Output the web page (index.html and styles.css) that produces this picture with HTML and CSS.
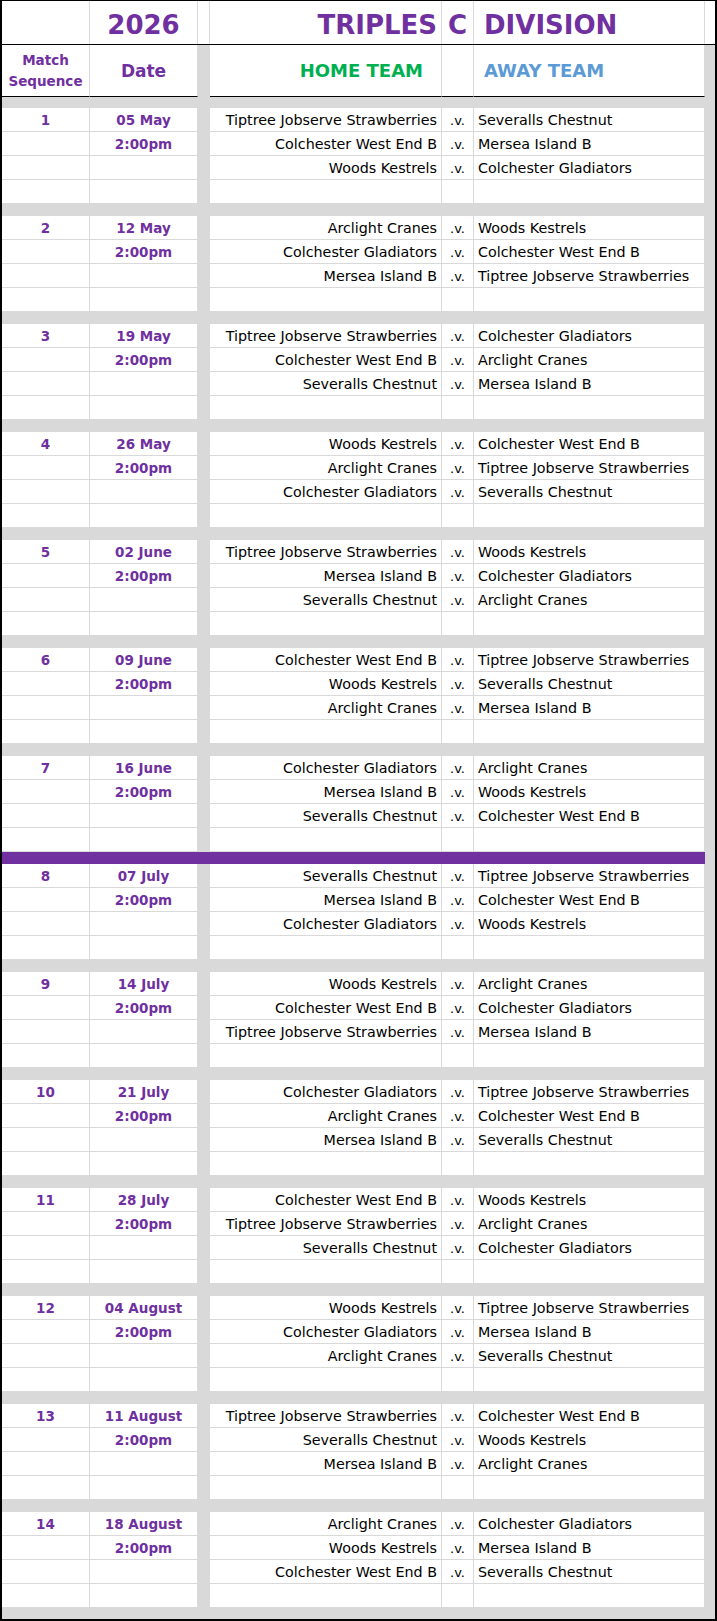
FILE: index.html
```html
<!DOCTYPE html>
<html lang="en">
<head>
<meta charset="utf-8">
<title>Triples C Division 2026</title>
<link rel="stylesheet" href="styles.css">
</head>
<body>
<div class="sheet">
  <div class="grid title">
    <div class="c"></div>
    <div class="c ctr">2026</div>
    <div class="c"></div>
    <div class="c home">TRIPLES</div>
    <div class="c ctr">C</div>
    <div class="c away">DIVISION</div>
    <div class="c last"></div>
  </div>
  <div class="grid head">
    <div class="c ctr seqhead">Match<br>Sequence</div>
    <div class="c ctr datehead">Date</div>
    <div class="gap"></div>
    <div class="c home green">HOME TEAM</div>
    <div class="c"></div>
    <div class="c away blue">AWAY TEAM</div>
    <div class="gap"></div>
  </div>
  <div class="band top"></div>

  <!-- 1 -->
  <div class="grid row"><div class="c num">1</div><div class="c num">05 May</div><div class="gap"></div><div class="c home">Tiptree Jobserve Strawberries</div><div class="c vs">.v.</div><div class="c away">Severalls Chestnut</div><div class="gap"></div></div>
  <div class="grid row"><div class="c num"></div><div class="c num">2:00pm</div><div class="gap"></div><div class="c home">Colchester West End B</div><div class="c vs">.v.</div><div class="c away">Mersea Island B</div><div class="gap"></div></div>
  <div class="grid row"><div class="c num"></div><div class="c num"></div><div class="gap"></div><div class="c home">Woods Kestrels</div><div class="c vs">.v.</div><div class="c away">Colchester Gladiators</div><div class="gap"></div></div>
  <div class="grid row"><div class="c"></div><div class="c"></div><div class="gap"></div><div class="c"></div><div class="c"></div><div class="c"></div><div class="gap"></div></div>
  <div class="band"></div>

  <!-- 2 -->
  <div class="grid row"><div class="c num">2</div><div class="c num">12 May</div><div class="gap"></div><div class="c home">Arclight Cranes</div><div class="c vs">.v.</div><div class="c away">Woods Kestrels</div><div class="gap"></div></div>
  <div class="grid row"><div class="c num"></div><div class="c num">2:00pm</div><div class="gap"></div><div class="c home">Colchester Gladiators</div><div class="c vs">.v.</div><div class="c away">Colchester West End B</div><div class="gap"></div></div>
  <div class="grid row"><div class="c num"></div><div class="c num"></div><div class="gap"></div><div class="c home">Mersea Island B</div><div class="c vs">.v.</div><div class="c away">Tiptree Jobserve Strawberries</div><div class="gap"></div></div>
  <div class="grid row"><div class="c"></div><div class="c"></div><div class="gap"></div><div class="c"></div><div class="c"></div><div class="c"></div><div class="gap"></div></div>
  <div class="band"></div>

  <!-- 3 -->
  <div class="grid row"><div class="c num">3</div><div class="c num">19 May</div><div class="gap"></div><div class="c home">Tiptree Jobserve Strawberries</div><div class="c vs">.v.</div><div class="c away">Colchester Gladiators</div><div class="gap"></div></div>
  <div class="grid row"><div class="c num"></div><div class="c num">2:00pm</div><div class="gap"></div><div class="c home">Colchester West End B</div><div class="c vs">.v.</div><div class="c away">Arclight Cranes</div><div class="gap"></div></div>
  <div class="grid row"><div class="c num"></div><div class="c num"></div><div class="gap"></div><div class="c home">Severalls Chestnut</div><div class="c vs">.v.</div><div class="c away">Mersea Island B</div><div class="gap"></div></div>
  <div class="grid row"><div class="c"></div><div class="c"></div><div class="gap"></div><div class="c"></div><div class="c"></div><div class="c"></div><div class="gap"></div></div>
  <div class="band"></div>

  <!-- 4 -->
  <div class="grid row"><div class="c num">4</div><div class="c num">26 May</div><div class="gap"></div><div class="c home">Woods Kestrels</div><div class="c vs">.v.</div><div class="c away">Colchester West End B</div><div class="gap"></div></div>
  <div class="grid row"><div class="c num"></div><div class="c num">2:00pm</div><div class="gap"></div><div class="c home">Arclight Cranes</div><div class="c vs">.v.</div><div class="c away">Tiptree Jobserve Strawberries</div><div class="gap"></div></div>
  <div class="grid row"><div class="c num"></div><div class="c num"></div><div class="gap"></div><div class="c home">Colchester Gladiators</div><div class="c vs">.v.</div><div class="c away">Severalls Chestnut</div><div class="gap"></div></div>
  <div class="grid row"><div class="c"></div><div class="c"></div><div class="gap"></div><div class="c"></div><div class="c"></div><div class="c"></div><div class="gap"></div></div>
  <div class="band"></div>

  <!-- 5 -->
  <div class="grid row"><div class="c num">5</div><div class="c num">02 June</div><div class="gap"></div><div class="c home">Tiptree Jobserve Strawberries</div><div class="c vs">.v.</div><div class="c away">Woods Kestrels</div><div class="gap"></div></div>
  <div class="grid row"><div class="c num"></div><div class="c num">2:00pm</div><div class="gap"></div><div class="c home">Mersea Island B</div><div class="c vs">.v.</div><div class="c away">Colchester Gladiators</div><div class="gap"></div></div>
  <div class="grid row"><div class="c num"></div><div class="c num"></div><div class="gap"></div><div class="c home">Severalls Chestnut</div><div class="c vs">.v.</div><div class="c away">Arclight Cranes</div><div class="gap"></div></div>
  <div class="grid row"><div class="c"></div><div class="c"></div><div class="gap"></div><div class="c"></div><div class="c"></div><div class="c"></div><div class="gap"></div></div>
  <div class="band"></div>

  <!-- 6 -->
  <div class="grid row"><div class="c num">6</div><div class="c num">09 June</div><div class="gap"></div><div class="c home">Colchester West End B</div><div class="c vs">.v.</div><div class="c away">Tiptree Jobserve Strawberries</div><div class="gap"></div></div>
  <div class="grid row"><div class="c num"></div><div class="c num">2:00pm</div><div class="gap"></div><div class="c home">Woods Kestrels</div><div class="c vs">.v.</div><div class="c away">Severalls Chestnut</div><div class="gap"></div></div>
  <div class="grid row"><div class="c num"></div><div class="c num"></div><div class="gap"></div><div class="c home">Arclight Cranes</div><div class="c vs">.v.</div><div class="c away">Mersea Island B</div><div class="gap"></div></div>
  <div class="grid row"><div class="c"></div><div class="c"></div><div class="gap"></div><div class="c"></div><div class="c"></div><div class="c"></div><div class="gap"></div></div>
  <div class="band"></div>

  <!-- 7 -->
  <div class="grid row"><div class="c num">7</div><div class="c num">16 June</div><div class="gap"></div><div class="c home">Colchester Gladiators</div><div class="c vs">.v.</div><div class="c away">Arclight Cranes</div><div class="gap"></div></div>
  <div class="grid row"><div class="c num"></div><div class="c num">2:00pm</div><div class="gap"></div><div class="c home">Mersea Island B</div><div class="c vs">.v.</div><div class="c away">Woods Kestrels</div><div class="gap"></div></div>
  <div class="grid row"><div class="c num"></div><div class="c num"></div><div class="gap"></div><div class="c home">Severalls Chestnut</div><div class="c vs">.v.</div><div class="c away">Colchester West End B</div><div class="gap"></div></div>
  <div class="grid row"><div class="c"></div><div class="c"></div><div class="gap"></div><div class="c"></div><div class="c"></div><div class="c"></div><div class="gap"></div></div>
  <div class="band purple"></div>

  <!-- 8 -->
  <div class="grid row"><div class="c num">8</div><div class="c num">07 July</div><div class="gap"></div><div class="c home">Severalls Chestnut</div><div class="c vs">.v.</div><div class="c away">Tiptree Jobserve Strawberries</div><div class="gap"></div></div>
  <div class="grid row"><div class="c num"></div><div class="c num">2:00pm</div><div class="gap"></div><div class="c home">Mersea Island B</div><div class="c vs">.v.</div><div class="c away">Colchester West End B</div><div class="gap"></div></div>
  <div class="grid row"><div class="c num"></div><div class="c num"></div><div class="gap"></div><div class="c home">Colchester Gladiators</div><div class="c vs">.v.</div><div class="c away">Woods Kestrels</div><div class="gap"></div></div>
  <div class="grid row"><div class="c"></div><div class="c"></div><div class="gap"></div><div class="c"></div><div class="c"></div><div class="c"></div><div class="gap"></div></div>
  <div class="band"></div>

  <!-- 9 -->
  <div class="grid row"><div class="c num">9</div><div class="c num">14 July</div><div class="gap"></div><div class="c home">Woods Kestrels</div><div class="c vs">.v.</div><div class="c away">Arclight Cranes</div><div class="gap"></div></div>
  <div class="grid row"><div class="c num"></div><div class="c num">2:00pm</div><div class="gap"></div><div class="c home">Colchester West End B</div><div class="c vs">.v.</div><div class="c away">Colchester Gladiators</div><div class="gap"></div></div>
  <div class="grid row"><div class="c num"></div><div class="c num"></div><div class="gap"></div><div class="c home">Tiptree Jobserve Strawberries</div><div class="c vs">.v.</div><div class="c away">Mersea Island B</div><div class="gap"></div></div>
  <div class="grid row"><div class="c"></div><div class="c"></div><div class="gap"></div><div class="c"></div><div class="c"></div><div class="c"></div><div class="gap"></div></div>
  <div class="band"></div>

  <!-- 10 -->
  <div class="grid row"><div class="c num">10</div><div class="c num">21 July</div><div class="gap"></div><div class="c home">Colchester Gladiators</div><div class="c vs">.v.</div><div class="c away">Tiptree Jobserve Strawberries</div><div class="gap"></div></div>
  <div class="grid row"><div class="c num"></div><div class="c num">2:00pm</div><div class="gap"></div><div class="c home">Arclight Cranes</div><div class="c vs">.v.</div><div class="c away">Colchester West End B</div><div class="gap"></div></div>
  <div class="grid row"><div class="c num"></div><div class="c num"></div><div class="gap"></div><div class="c home">Mersea Island B</div><div class="c vs">.v.</div><div class="c away">Severalls Chestnut</div><div class="gap"></div></div>
  <div class="grid row"><div class="c"></div><div class="c"></div><div class="gap"></div><div class="c"></div><div class="c"></div><div class="c"></div><div class="gap"></div></div>
  <div class="band"></div>

  <!-- 11 -->
  <div class="grid row"><div class="c num">11</div><div class="c num">28 July</div><div class="gap"></div><div class="c home">Colchester West End B</div><div class="c vs">.v.</div><div class="c away">Woods Kestrels</div><div class="gap"></div></div>
  <div class="grid row"><div class="c num"></div><div class="c num">2:00pm</div><div class="gap"></div><div class="c home">Tiptree Jobserve Strawberries</div><div class="c vs">.v.</div><div class="c away">Arclight Cranes</div><div class="gap"></div></div>
  <div class="grid row"><div class="c num"></div><div class="c num"></div><div class="gap"></div><div class="c home">Severalls Chestnut</div><div class="c vs">.v.</div><div class="c away">Colchester Gladiators</div><div class="gap"></div></div>
  <div class="grid row"><div class="c"></div><div class="c"></div><div class="gap"></div><div class="c"></div><div class="c"></div><div class="c"></div><div class="gap"></div></div>
  <div class="band"></div>

  <!-- 12 -->
  <div class="grid row"><div class="c num">12</div><div class="c num">04 August</div><div class="gap"></div><div class="c home">Woods Kestrels</div><div class="c vs">.v.</div><div class="c away">Tiptree Jobserve Strawberries</div><div class="gap"></div></div>
  <div class="grid row"><div class="c num"></div><div class="c num">2:00pm</div><div class="gap"></div><div class="c home">Colchester Gladiators</div><div class="c vs">.v.</div><div class="c away">Mersea Island B</div><div class="gap"></div></div>
  <div class="grid row"><div class="c num"></div><div class="c num"></div><div class="gap"></div><div class="c home">Arclight Cranes</div><div class="c vs">.v.</div><div class="c away">Severalls Chestnut</div><div class="gap"></div></div>
  <div class="grid row"><div class="c"></div><div class="c"></div><div class="gap"></div><div class="c"></div><div class="c"></div><div class="c"></div><div class="gap"></div></div>
  <div class="band"></div>

  <!-- 13 -->
  <div class="grid row"><div class="c num">13</div><div class="c num">11 August</div><div class="gap"></div><div class="c home">Tiptree Jobserve Strawberries</div><div class="c vs">.v.</div><div class="c away">Colchester West End B</div><div class="gap"></div></div>
  <div class="grid row"><div class="c num"></div><div class="c num">2:00pm</div><div class="gap"></div><div class="c home">Severalls Chestnut</div><div class="c vs">.v.</div><div class="c away">Woods Kestrels</div><div class="gap"></div></div>
  <div class="grid row"><div class="c num"></div><div class="c num"></div><div class="gap"></div><div class="c home">Mersea Island B</div><div class="c vs">.v.</div><div class="c away">Arclight Cranes</div><div class="gap"></div></div>
  <div class="grid row"><div class="c"></div><div class="c"></div><div class="gap"></div><div class="c"></div><div class="c"></div><div class="c"></div><div class="gap"></div></div>
  <div class="band"></div>

  <!-- 14 -->
  <div class="grid row"><div class="c num">14</div><div class="c num">18 August</div><div class="gap"></div><div class="c home">Arclight Cranes</div><div class="c vs">.v.</div><div class="c away">Colchester Gladiators</div><div class="gap"></div></div>
  <div class="grid row"><div class="c num"></div><div class="c num">2:00pm</div><div class="gap"></div><div class="c home">Woods Kestrels</div><div class="c vs">.v.</div><div class="c away">Mersea Island B</div><div class="gap"></div></div>
  <div class="grid row"><div class="c num"></div><div class="c num"></div><div class="gap"></div><div class="c home">Colchester West End B</div><div class="c vs">.v.</div><div class="c away">Severalls Chestnut</div><div class="gap"></div></div>
  <div class="grid row"><div class="c"></div><div class="c"></div><div class="gap"></div><div class="c"></div><div class="c"></div><div class="c"></div><div class="gap"></div></div>
  <div class="band end"></div>
</div>
</body>
</html>
```

FILE: styles.css
```css
* {
  box-sizing: border-box;
}

html, body {
  margin: 0;
  padding: 0;
  background: #ffffff;
}

body {
  font-family: "DejaVu Sans", "Liberation Sans", sans-serif;
  color: #000000;
}

.sheet {
  width: 717px;
  height: 1621px;
  border: 2px solid #000000;
  border-top-width: 1px;
  background: #ffffff;
  overflow: hidden;
}

.grid {
  display: grid;
  grid-template-columns: 88px 108px 12px 232px 32px 231px 10px;
}

.c {
  display: flex;
  white-space: nowrap;
  border-right: 1px solid #d9d9d9;
}

.ctr {
  justify-content: center;
}

.home {
  justify-content: flex-end;
  padding-right: 4px;
}

.away {
  justify-content: flex-start;
  padding-left: 4px;
}

.gap {
  background: #d9d9d9;
}

/* Title row */
.title {
  height: 44px;
  border-bottom: 1px solid #000000;
}

.title .c {
  align-items: flex-end;
  padding-bottom: 4px;
  font-size: 26px;
  font-weight: bold;
  color: #7030a0;
}

.title .away {
  padding-left: 10px;
}

.title .last {
  border-right: 0;
}

/* Column heading row */
.head {
  height: 52px;
}

.head .c {
  align-items: center;
  border-bottom: 1px solid #000000;
  font-weight: bold;
  color: #7030a0;
  font-size: 18px;
}

.head .seqhead {
  font-size: 13.5px;
  line-height: 21px;
  text-align: center;
}

.head .datehead {
  font-size: 17px;
}

.head .home {
  padding-right: 18px;
}

.head .away {
  padding-left: 10px;
}

.head .green {
  color: #00b050;
}

.head .blue {
  color: #5b9bd5;
}

/* Bands */
.band {
  height: 12px;
  background: #d9d9d9;
}

.band.top,
.band.end {
  height: 11px;
}

.band.purple {
  background: #7030a0;
  border-right: 10px solid #d9d9d9;
}

/* Fixture rows */
.row {
  height: 24px;
}

.row .c {
  align-items: flex-end;
  padding-bottom: 2px;
  border-bottom: 1px solid #d9d9d9;
  font-size: 14.3px;
  line-height: 17px;
}

.row .num {
  justify-content: center;
  font-weight: bold;
  color: #7030a0;
  font-size: 13.5px;
}

.row .vs {
  justify-content: center;
  font-size: 13px;
}
```
